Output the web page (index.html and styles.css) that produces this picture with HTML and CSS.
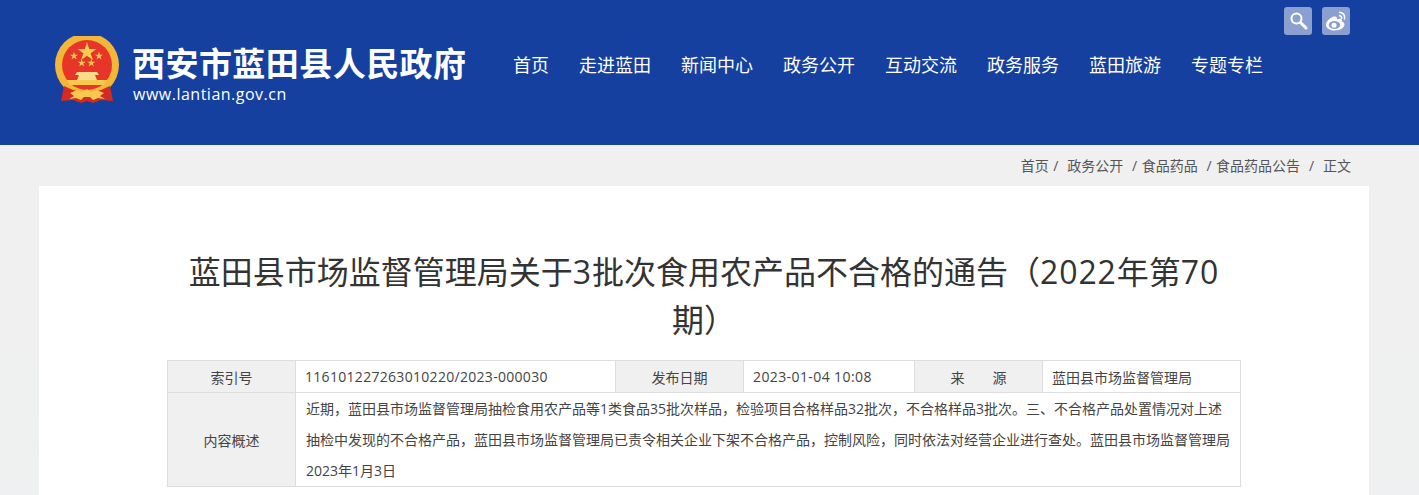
FILE: index.html

```html
<!DOCTYPE html>
<html lang="zh-CN">
<head>
  <meta charset="UTF-8" />
  <meta name="viewport" content="width=device-width, initial-scale=1.0"/>
  <title>蓝田县人民政府</title>
  <link rel="stylesheet" href="styles.css">
</head>
<body>
  <div class="header">
    <div class="tools">
      <a class="tool" href="#">
        <svg width="28" height="28" viewBox="0 0 28 28"><circle cx="12.5" cy="11.5" r="5" fill="none" stroke="#fff" stroke-width="2"/><path d="M16.5 15.5L22 21" stroke="#fff" stroke-width="3" stroke-linecap="round"/></svg>
      </a>
      <a class="tool" href="#">
        <svg width="28" height="28" viewBox="0 0 28 28">
          <path d="M11.5 9.500C7.500 11 4 14.500 4 18c0 3.500 4.500 5.500 8.800 5.500 5.200 0 9.700-3 9.700-6 0-2-2-2.700-2.800-3 .6-1.500.4-2.700-1.800-2.800-1.200 0-2.500.5-3 .7.300-1.500.1-3.200-3.400-2.900z" fill="#fff"/>
          <ellipse cx="12.500" cy="18" rx="5.800" ry="4" fill="#8b9fd0"/>
          <circle cx="12" cy="18.300" r="2.500" fill="#fff"/>
          <path d="M17.500 5.500c3.500-.3 6 3 5 6.500M17.500 8.800c1.500-.2 2.500 1.200 2 2.800" fill="none" stroke="#fff" stroke-width="1.500" stroke-linecap="round"/>
        </svg>
      </a>
    </div>
    <div class="header-main">
      <a class="logo" href="#">
        <svg class="emblem" width="65" height="68" viewBox="0 0 65 68">
          <defs>
            <polygon id="star" points="0,-10 2.200,-3.100 9.500,-3.100 3.600,1.200 5.900,8.100 0,3.800 -5.900,8.100 -3.600,1.200 -9.500,-3.100 -2.200,-3.100"/>
          </defs>
          <circle cx="32" cy="29" r="32" fill="#f2b738"/>
          <circle cx="32" cy="29" r="25" fill="#e8352a"/>
          <path d="M11.700 44h40.600l-3 5H14.700z" fill="#f6c94e"/>
          <path d="M24 39h16l2 5H22zM22 36h20l2 3H20z" fill="#f8dc8a"/>
          <use href="#star" transform="translate(32 16)" fill="#f7cf4d"/>
          <use href="#star" transform="translate(19 20) scale(.42)" fill="#f7cf4d"/>
          <use href="#star" transform="translate(44 20) scale(.42)" fill="#f7cf4d"/>
          <use href="#star" transform="translate(26.700 27) scale(.42)" fill="#f7cf4d"/>
          <use href="#star" transform="translate(36.300 27) scale(.42)" fill="#f7cf4d"/>
          <path d="M9 50l9 4 14 3 14-3 9-4 3 15-12-1-8 3-6-2-6 2-8-3-12 1z" fill="#d52a22"/>
          <path d="M15 57l7-3 6 2 4-3 4 3 6-2 7 3-4 3 5 3-7-1-5 2-3-3h-6l-3 3-5-2-7 1 5-3z" fill="#f6c94e"/>
        </svg>
        <div class="logo-text">
          <div class="logo-name">西安市蓝田县人民政府</div>
          <div class="logo-url">www.lantian.gov.cn</div>
        </div>
      </a>
      <div class="nav">
        <a href="#">首页</a>
        <a href="#">走进蓝田</a>
        <a href="#">新闻中心</a>
        <a href="#">政务公开</a>
        <a href="#">互动交流</a>
        <a href="#">政务服务</a>
        <a href="#">蓝田旅游</a>
        <a href="#">专题专栏</a>
      </div>
    </div>
  </div>

  <div class="crumbs"><a href="#">首页</a> /  <a href="#">政务公开</a>  / <a href="#">食品药品</a>  / <a href="#">食品药品公告</a>  /  <a href="#">正文</a></div>

  <div class="content">
    <h1 class="title">蓝田县市场监督管理局关于<span class="num">3</span>批次食用农产品不合格的通告（<span class="num">2022</span>年第<span class="num">70</span>期）</h1>
    <table class="info">
      <tr class="row-top">
        <th class="col-a">索引号</th>
        <td class="col-b num-cell">116101227263010220/2023-000030</td>
        <th class="col-c">发布日期</th>
        <td class="col-d num-cell date">2023-01-04 10:08</td>
        <th class="col-e">来　　源</th>
        <td class="col-f">蓝田县市场监督管理局</td>
      </tr>
      <tr>
        <th>内容概述</th>
        <td colspan="5" class="summary">近期，蓝田县市场监督管理局抽检食用农产品等1类食品35批次样品，检验项目合格样品32批次，不合格样品3批次。三、不合格产品处置情况对上述抽检中发现的不合格产品，蓝田县市场监督管理局已责令相关企业下架不合格产品，控制风险，同时依法对经营企业进行查处。蓝田县市场监督管理局2023年1月3日</td>
      </tr>
    </table>
  </div>
</body>
</html>
```

FILE: styles.css

```css
* {
  box-sizing: border-box;
}

html, body {
  height: 495px;
  overflow: hidden;
}

body {
  margin: 0;
  padding: 0;
  background: linear-gradient(#f0f0f0 70%, #eef0f1);
  font-family: "Open Sans", "Noto Sans CJK SC", sans-serif;
  color: #333;
}

a {
  color: inherit;
  text-decoration: none;
}

.header {
  height: 145px;
  background: #15409f;
  padding-top: 7px;
}

.tools {
  display: flex;
  justify-content: flex-end;
  gap: 10px;
  padding-right: 69px;
}

.tool {
  width: 28px;
  height: 28px;
  border-radius: 3px;
  background: #8b9fd0;
  display: block;
}

.tool svg {
  display: block;
}

.header-main {
  display: flex;
  align-items: flex-start;
  padding-left: 55px;
  margin-top: 1px;
}

.logo {
  display: flex;
  width: 458px;
  gap: 12px;
}

.logo-name {
  color: #fff;
  font-size: 33px;
  font-weight: 700;
  line-height: 40px;
  margin-top: 8px;
  letter-spacing: 0.45px;
  white-space: nowrap;
}

.logo-url {
  color: #fff;
  font-size: 16px;
  font-weight: 500;
  line-height: 20px;
  letter-spacing: 0.5px;
  margin-left: 1px;
}

.nav {
  display: flex;
  gap: 30px;
  color: #fff;
  font-size: 18px;
  line-height: 26px;
  margin-top: 16px;
}

.crumbs {
  height: 41px;
  line-height: 41px;
  text-align: right;
  white-space: pre;
  word-spacing: 0.8px;
  padding-right: 68px;
  font-size: 14px;
  color: #555;
}

.content {
  margin: 0 50px 0 39px;
  height: 309px;
  background: #fff;
  padding: 62px 128px 0;
}

.title {
  margin: 0 0 16px;
  font-size: 32px;
  font-weight: 400;
  line-height: 48px;
  text-align: center;
  color: #333;
  text-spacing-trim: space-all;
}

.num {
  letter-spacing: 0.9px;
}

.info {
  width: 1074px;
  border-collapse: collapse;
  table-layout: fixed;
  font-size: 14px;
}

.info th,
.info td {
  border: 1px solid #ddd;
  color: #444;
  font-weight: 400;
}

.info td {
  padding: 0 10px 0 9px;
}

.info th {
  padding: 0 10px;
  background: #f0f0f0;
  text-align: center;
}

.num-cell {
  letter-spacing: 0.3px;
}

.info .date {
  letter-spacing: 0.4px;
}

.row-top {
  height: 32px;
}

.col-a { width: 128px; }
.col-b { width: 320px; }
.col-c { width: 128px; }
.col-d { width: 171px; }
.col-e { width: 128px; }

.info .summary {
  padding-left: 10px;
  line-height: 31px;
}
```
